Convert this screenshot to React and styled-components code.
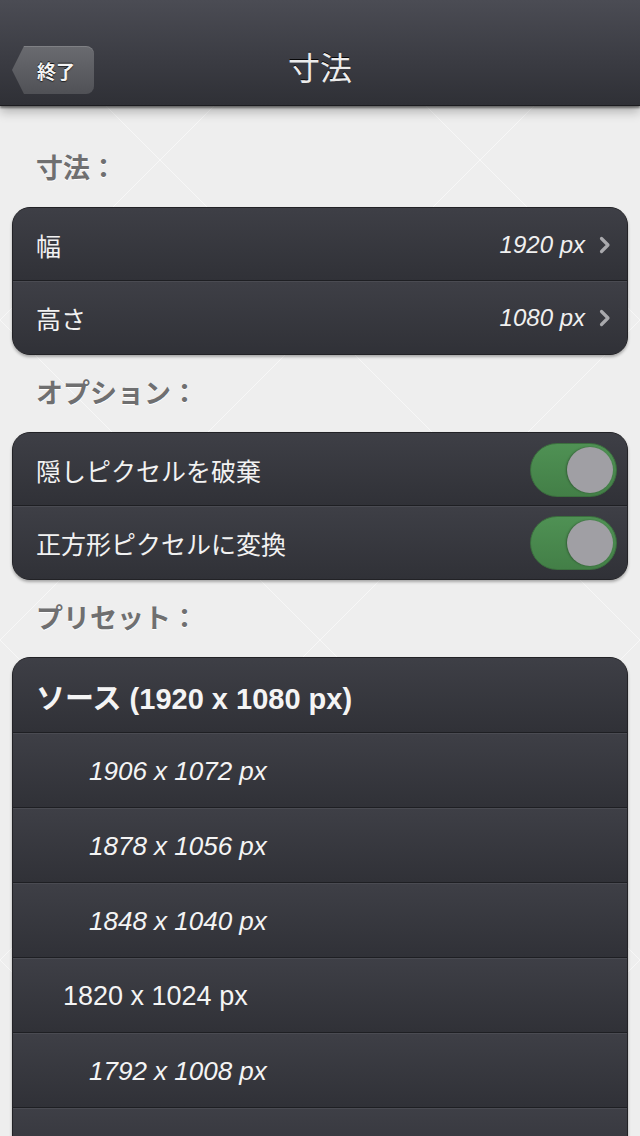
import styled, { createGlobalStyle } from 'styled-components'

const GlobalStyle = createGlobalStyle`
  html, body {
    margin: 0;
    padding: 0;
    height: 1136px;
    overflow: hidden;
    background: #efefef;
  }
  * { box-sizing: border-box; }
`

const sizes = [
  { label: '幅', value: '1920 px' },
  { label: '高さ', value: '1080 px' },
]

const options = ['隠しピクセルを破棄', '正方形ピクセルに変換']

const presets = [
  { text: 'ソース (1920 x 1080 px)', kind: 'source' },
  { text: '1906 x 1072 px', kind: 'italic' },
  { text: '1878 x 1056 px', kind: 'italic' },
  { text: '1848 x 1040 px', kind: 'italic' },
  { text: '1820 x 1024 px', kind: 'plain' },
  { text: '1792 x 1008 px', kind: 'italic' },
  { text: '1764 x 992 px', kind: 'italic' },
]

export default function App () {
  return (
    <Page>
      <GlobalStyle />
      <NavBar>
        <BackButton>終了</BackButton>
        <Title>寸法</Title>
      </NavBar>
      <Content>
        <SectionLabel $first>寸法：</SectionLabel>
        <Card>
          {sizes.map((s) => (
            <Row key={s.label}>
              <RowLabel>{s.label}</RowLabel>
              <Value>{s.value}</Value>
              <Chevron width="12" height="18" viewBox="0 0 12 18">
                <path d="M2.5 2.5 L9 9 L2.5 15.5" fill="none" stroke="#a9a9ad" strokeWidth="3.2" strokeLinecap="round" strokeLinejoin="round" />
              </Chevron>
            </Row>
          ))}
        </Card>
        <SectionLabel>オプション：</SectionLabel>
        <Card>
          {options.map((o) => (
            <Row key={o}>
              <RowLabel>{o}</RowLabel>
              <Toggle><Knob /></Toggle>
            </Row>
          ))}
        </Card>
        <SectionLabel>プリセット：</SectionLabel>
        <Card $open>
          {presets.map((p) => (
            <PresetRow key={p.text} $kind={p.kind}>{p.text}</PresetRow>
          ))}
        </Card>
      </Content>
    </Page>
  )
}

const Page = styled.div`
  width: 640px;
  height: 1136px;
  overflow: hidden;
  font-family: "Liberation Sans", "Noto Sans CJK JP", sans-serif;
  background:
    linear-gradient(135deg, transparent 49.85%, rgba(255,255,255,0.55) 50%, transparent 50.15%) 0 0 / 320px 320px,
    linear-gradient(45deg, transparent 49.85%, rgba(255,255,255,0.55) 50%, transparent 50.15%) 0 0 / 320px 320px,
    #eeeeee;
`

const NavBar = styled.header`
  position: relative;
  z-index: 2;
  height: 106px;
  display: flex;
  align-items: flex-end;
  justify-content: center;
  padding-bottom: 12px;
  background: linear-gradient(#4b4c54, #3a3b42 60%, #2f3036);
  border-bottom: 1px solid #1c1c20;
  box-shadow: 0 2px 2px rgba(0,0,0,0.45), 0 6px 10px rgba(0,0,0,0.25);
`

const BackButton = styled.div`
  position: absolute;
  left: 12px;
  top: 46px;
  width: 82px;
  height: 48px;
  display: flex;
  align-items: center;
  justify-content: center;
  padding-left: 6px;
  color: #f4f4f4;
  font-size: 19px;
  font-weight: 700;
  text-shadow: 0 -1px 0 rgba(0,0,0,0.8), 0 1px 1px rgba(0,0,0,0.6);
  background: linear-gradient(#6a6b70, #505156);
  border-radius: 8px;
  clip-path: polygon(12px 0, 100% 0, 100% 100%, 12px 100%, 0 50%);
  box-shadow: inset 0 1px 0 rgba(255,255,255,0.15);
`

const Title = styled.h1`
  margin: 0 0 4px;
  font-size: 32px;
  font-weight: 400;
  color: #ececec;
  text-shadow: 0 -1px 0 rgba(0,0,0,0.9);
`

const Content = styled.main`
  display: flex;
  flex-direction: column;
  padding: 0 12px;
`

const SectionLabel = styled.div`
  height: 77px;
  margin-top: ${(p) => (p.$first ? '24px' : '0')};
  display: flex;
  align-items: center;
  padding: 0 0 4px 24px;
  font-size: 27px;
  font-weight: 700;
  color: #6f6f70;
  text-shadow: 0 1px 0 #fff;
`

const Card = styled.section`
  background: #34353b;
  border: 1px solid #222226;
  border-radius: 18px;
  overflow: hidden;
  box-shadow: 0 2px 3px rgba(0,0,0,0.3);
  ${(p) => p.$open && 'border-bottom-left-radius: 0; border-bottom-right-radius: 0;'}
`

const rowBase = `
  display: flex;
  align-items: center;
  background: linear-gradient(#3e3f46, #303137);
  border-top: 1px solid #4a4b52;
  box-shadow: 0 -1px 0 #1e1f23;
  &:first-child { border-top: none; box-shadow: none; }
`

const Row = styled.div`
  ${rowBase}
  height: 73px;
  padding: 0 10px 0 23px;
`

const RowLabel = styled.span`
  flex: 1;
  font-size: 25px;
  color: #f2f2f2;
`

const Value = styled.span`
  font-size: 24px;
  font-style: italic;
  color: #f0f0f0;
  margin-right: 14px;
`

const Chevron = styled.svg`
  margin-right: 6px;
`

const Toggle = styled.div`
  width: 87px;
  height: 54px;
  border-radius: 27px;
  background: linear-gradient(#4f9154, #437f47);
  border: 1px solid #3b6e3e;
  display: flex;
  align-items: center;
  justify-content: flex-end;
  padding-right: 3px;
`

const Knob = styled.div`
  width: 46px;
  height: 46px;
  border-radius: 50%;
  background: #a09fa4;
  box-shadow: -1px 0 2px rgba(0,0,0,0.3);
`

const presetFont = { source: '29px', italic: '26px', plain: '27px' }
const presetIndent = { source: '23px', italic: '76px', plain: '50px' }

const PresetRow = styled.div`
  ${rowBase}
  height: 75px;
  color: #f4f4f4;
  font-size: ${(p) => presetFont[p.$kind]};
  font-weight: ${(p) => (p.$kind === 'source' ? 700 : 400)};
  font-style: ${(p) => (p.$kind === 'italic' ? 'italic' : 'normal')};
  padding-left: ${(p) => presetIndent[p.$kind]};
`
